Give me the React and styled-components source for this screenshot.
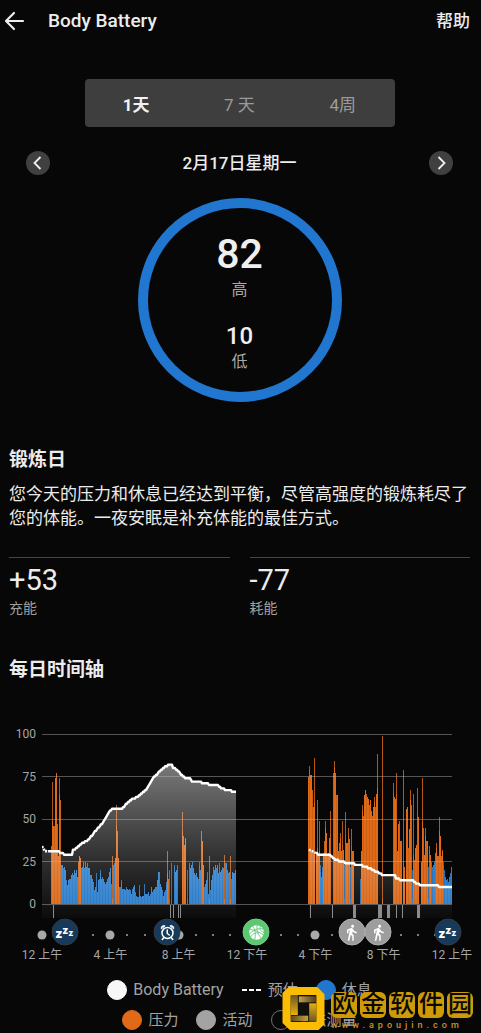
import React from 'react';
import styled, { createGlobalStyle } from 'styled-components';
import { MdDirectionsWalk } from 'react-icons/md';

const GlobalStyle = createGlobalStyle`
  *, *::before, *::after { box-sizing: border-box; }
  body {
    margin: 0;
    background: #070707;
    color: #ececec;
    font-family: Roboto, "Noto Sans CJK SC", sans-serif;
  }
  h1, h2, p, dl, dd, ul, ol { margin: 0; padding: 0; }
  ul, ol { list-style: none; }
  button { font: inherit; color: inherit; border: 0; padding: 0; cursor: pointer; }
`;

const Page = styled.main`
  position: relative;
  padding: 0 11px 3px 9px;
  overflow: hidden;
`;

const Header = styled.header`
  display: flex;
  align-items: center;
  height: 41px;
`;

const BackButton = styled.button`
  display: flex;
  width: 39px;
  margin-left: -5px;
  background: none;
`;

const HeaderTitle = styled.h1`
  flex: 1;
  padding-left: 5px;
  font-size: 19px;
  line-height: 24px;
  font-weight: 500;
`;

const HelpLink = styled.a`
  color: inherit;
  text-decoration: none;
  font-size: 17px;
  line-height: 24px;
  font-weight: 500;
`;

const RangeTabs = styled.nav`
  display: flex;
  max-width: 310px;
  height: 48px;
  margin: 38px auto 0;
  border-radius: 4px;
  background: #3e3e3e;
`;

const RangeTab = styled.button`
  flex: 1;
  background: none;
  font-size: 17px;
  font-weight: ${(p) => (p.$active ? 700 : 400)};
  color: ${(p) => (p.$active ? '#f2f2f2' : '#9b9b9b')};
`;

const DateRow = styled.div`
  display: flex;
  align-items: center;
  justify-content: space-between;
  margin: 24px 17px 0;
  font-size: 17px;
  line-height: 24px;
  font-weight: 500;
`;

const RoundButton = styled.button`
  display: grid;
  place-items: center;
  width: 24px;
  height: 24px;
  border-radius: 50%;
  background: #404040;
`;

const Ring = styled.section`
  display: flex;
  flex-direction: column;
  align-items: center;
  width: 204px;
  height: 204px;
  margin: 23px auto 0;
  padding-top: 22px;
  border: 10px solid #2176cf;
  border-radius: 50%;
`;

const RingValue = styled.div`
  font-size: ${(p) => (p.$large ? 41 : 24)}px;
  line-height: ${(p) => (p.$large ? 48 : 28)}px;
  margin-top: ${(p) => (p.$large ? 0 : 20)}px;
  font-weight: 500;
  color: #efefef;
`;

const RingLabel = styled.div`
  font-size: 16px;
  line-height: 24px;
  color: #a8a8a8;
`;

const SectionTitle = styled.h2`
  margin-top: ${(p) => p.$top}px;
  font-size: 19px;
  line-height: 24px;
  font-weight: 700;
`;

const Summary = styled.p`
  margin-top: 10px;
  font-size: 17px;
  line-height: 24px;
`;

const Metrics = styled.dl`
  display: grid;
  grid-template-columns: 1fr 1fr;
  gap: 20px;
  margin-top: 27px;
`;

const Metric = styled.div`
  display: flex;
  flex-direction: column-reverse;
  padding-top: 6px;
  border-top: 1px solid #454545;
`;

const MetricValue = styled.dd`
  font-size: 29px;
  line-height: 32px;
  margin-bottom: 2px;
`;

const MetricLabel = styled.dt`
  font-size: 14px;
  line-height: 20px;
  color: #a0a0a0;
`;

const Chart = styled.section`
  display: grid;
  grid-template-columns: 27px 1fr;
  column-gap: 6px;
  margin-top: 44px;
  padding-right: 18px;
  font-size: 12px;
  line-height: 16px;
  color: #a6a6a6;
`;

const YAxis = styled.div`
  display: flex;
  flex-direction: column;
  justify-content: space-between;
  height: 186px;
  text-align: right;
`;

const Plot = styled.svg`
  display: block;
  width: 100%;
  height: 192px;
`;

const Timeline = styled.div`
  grid-column: 2;
  position: relative;
  height: 28px;
`;

const HourDot = styled.span`
  position: absolute;
  top: 17px;
  width: ${(p) => (p.$major ? 9 : 2)}px;
  height: ${(p) => (p.$major ? 9 : 2)}px;
  border-radius: 50%;
  background: #a9a9a9;
  transform: translate(-50%, -50%);
`;

const EventBadge = styled.span`
  position: absolute;
  top: 14px;
  display: grid;
  place-items: center;
  width: 27px;
  height: 27px;
  border-radius: 50%;
  border: 1px solid ${(p) => p.$edge};
  background: ${(p) => p.$color};
  color: #fff;
  transform: translate(-50%, -50%);
`;

const XAxis = styled.div`
  grid-column: 2;
  display: flex;
  justify-content: space-between;
  margin-top: 1px;
`;

const XTick = styled.span`
  display: flex;
  justify-content: center;
  width: 0;
  white-space: nowrap;
`;

const Legend = styled.ul`
  display: flex;
  flex-wrap: wrap;
  justify-content: center;
  gap: 10px 18px;
  max-width: 322px;
  margin: 17px auto 0;
  line-height: 20px;
  color: #a3a3a3;
`;

const LegendItem = styled.li`
  display: flex;
  align-items: center;
  gap: 6px;
  font-size: ${(p) => (p.$latin ? 16 : 15)}px;
`;

const Swatch = styled.span`
  width: 20px;
  height: 20px;
  border-radius: 50%;
  background: ${(p) => p.$color};
  border: 1px solid ${(p) => p.$edge || p.$color};
`;

const Watermark = styled.aside`
  position: absolute;
  right: 8px;
  bottom: 3px;
  display: flex;
  align-items: center;
  gap: 6px;
`;

const WatermarkText = styled.div`
  display: flex;
  flex-direction: column;
  gap: 2px;
  padding-top: 5px;
`;

const SealRow = styled.div`
  display: flex;
  gap: 3px;
`;

const Seal = styled.span`
  width: 26px;
  height: 26px;
  border-radius: 6px;
  background: #cf9a08;
  color: #0b0903;
  font-size: 24px;
  line-height: 25px;
  font-weight: 500;
  text-align: center;
`;

const SiteName = styled.span`
  font-size: 9px;
  line-height: 10px;
  letter-spacing: 4px;
  font-weight: 500;
  color: #c99425;
`;

const STRESS = '#e06a18';
const REST = '#2b7fd0';

// Runs of one-unit columns: [start, kind, levels]
const runs = [
  [9, 's', [34, 72, 46, 46, 74, 77, 47, 28, 74, 61]],
  [19, 'r', [23, 23, 21, 22, 20, 14, 11, 14, 15, 15, 17, 18, 17, 20, 18, 20, 16]],
  [36, 's', [25, 28, 27]],
  [39, 'r', [21, 22, 25, 21, 25, 22, 24, 21, 21, 17, 17, 15, 13, 8, 10, 18, 7, 14, 15, 20, 15, 16, 15, 13, 12, 13, 15, 16, 19, 21, 12]],
  [70, 's', [28]],
  [71, 'r', [23, 24]],
  [73, 's', [27, 58, 43, 27]],
  [77, 'r', [10, 10, 14, 9, 9, 9, 8, 10, 9, 8, 9, 8, 6, 9, 10, 11, 7, 5, 4, 4, 11, 5, 4, 5, 5, 12, 6, 6, 6, 7, 5, 6, 10, 7, 8, 9, 10, 10, 14, 19, 19, 12, 10, 8, 5, 7, 8, 13]],
  [125, 's', [31, 15]],
  [127, 'r', [20, 0, 24, 0, 0, 23, 19, 20, 23]],
  [140, 's', [54, 40, 35, 39]],
  [145, 'r', [20, 0, 24, 21, 23, 25, 21, 18, 17, 18, 16, 15, 25, 20]],
  [159, 's', [43, 37, 23]],
  [162, 'r', [10, 12, 14, 19, 6]],
  [167, 's', [28]],
  [168, 'r', [8, 14, 17, 22, 20, 23, 21, 23, 18, 24, 19, 20, 22, 21]],
  [182, 's', [29]],
  [183, 'r', [24, 24, 20, 18, 19]],
  [188, 's', [28]],
  [189, 'r', [15, 19, 18, 18, 20]],
  [266, 's', [75, 81, 76, 76, 67, 57, 86, 0, 30, 61, 28, 49]],
  [278, 'r', [23, 16, 22]],
  [281, 's', [30, 37, 49, 42, 28, 30, 39, 55, 0, 0, 77, 84, 77, 64, 64, 31, 36, 42, 31, 49, 32]],
  [302, 'r', [23]],
  [303, 's', [54, 36, 36, 45, 38]],
  [308, 'r', [22]],
  [309, 's', [44, 31, 31]],
  [318, 'r', [15]],
  [319, 's', [31, 58, 52, 64, 67, 65, 63, 62, 58, 61, 55, 52, 57, 63, 57, 65, 88, 0, 0, 0, 0, 99, 0]],
  [351, 's', [71, 63, 62, 77, 31, 47, 49, 37, 37, 0, 79, 22, 0, 56, 57, 33, 44, 67, 58]],
  [370, 'r', [20]],
  [371, 's', [65, 26, 33, 35, 68, 51, 0, 0, 25, 74, 45, 29, 45, 37, 37]],
  [386, 'r', [22]],
  [387, 's', [34, 29]],
  [389, 'r', [25, 22, 23, 25]],
  [393, 's', [30, 36, 28, 28, 51, 40, 28, 32]],
  [401, 'r', [25, 20, 16, 14, 15, 13, 16, 18, 22, 25]],
];

const morning = [[8, 31], [17, 31], [18, 30], [21, 30], [22, 29], [30, 29], [31, 32], [33, 32], [36, 34], [41, 36], [47, 38], [55, 44], [61, 48], [66, 53], [70, 56], [80, 56], [83, 58], [88, 61], [95, 63], [100, 65], [105, 68], [111, 74], [116, 77], [121, 80], [127, 82], [130, 82], [131, 80], [135, 79], [139, 76], [143, 74], [148, 74], [150, 72], [158, 72], [160, 71], [165, 71], [167, 70], [175, 70], [177, 69], [180, 68], [185, 67], [194, 66]];
const evening = [[274, 30], [277, 29], [287, 29], [291, 27], [298, 25], [306, 24], [318, 23], [323, 22], [328, 21], [334, 19], [338, 18], [341, 17], [353, 17], [354, 15], [360, 14], [370, 14], [374, 12], [380, 11], [395, 11], [397, 10], [410, 10]];

const activityTicks = [[11, 1], [128, 1], [131, 1], [136, 1], [138, 1], [268, 1], [290, 1], [311, 3], [336, 4], [345, 3], [354, 1], [360, 1], [375, 3]];

const BASE = 178;
const yOf = (level) => BASE - level * 1.7;

// The level is kept as a whole number, so the line moves in small steps.
function stepPoints(points) {
  const out = [];
  for (let i = 0; i < points.length - 1; i += 1) {
    const [x0, v0] = points[i];
    const [x1, v1] = points[i + 1];
    for (let x = x0; x < x1; x += 1) {
      out.push([x, Math.round(v0 + ((v1 - v0) * (x - x0)) / (x1 - x0))]);
    }
  }
  out.push(points[points.length - 1]);
  return out;
}

const toPath = (points) =>
  points.map(([x, v], i) => `${i ? 'L' : 'M'}${x} ${yOf(v).toFixed(1)}`).join('');

function areaPath(points, start, startLevel) {
  return `M${start} ${yOf(startLevel)}${toPath(points).replace('M', 'L')}V192H${start}Z`;
}

function Bars() {
  return runs.map(([start, kind, levels]) =>
    levels.map((level, i) => {
      const around = Math.max(levels[i - 1] || 0, levels[i + 1] || 0);
      const shared = Math.min(level, around + 3);
      const color = kind === 's' ? STRESS : REST;
      const x = start + i;
      return level > 0 ? (
        <g key={x} fill={color}>
          <rect x={x} y={yOf(shared)} width="1" height={shared * 1.7} opacity={x % 3 ? 1 : 0.9} />
          {level > shared && (
            <rect x={x} y={yOf(level)} width="1" height={(level - shared) * 1.7} opacity="0.8" />
          )}
        </g>
      ) : null;
    })
  );
}

function BatteryPlot() {
  const left = stepPoints(morning);
  const right = stepPoints(evening);
  return (
    <Plot viewBox="0 0 410 192" preserveAspectRatio="none" role="img" aria-label="Body Battery">
      <defs>
        <linearGradient id="level" gradientUnits="userSpaceOnUse" x1="0" y1="38" x2="0" y2="192">
          <stop offset="0" stopColor="#fff" stopOpacity="0.46" />
          <stop offset="0.6" stopColor="#fff" stopOpacity="0.17" />
          <stop offset="1" stopColor="#fff" stopOpacity="0.02" />
        </linearGradient>
      </defs>
      <g shapeRendering="crispEdges"><Bars /></g>
      <path d={areaPath(left, 0, 34)} fill="url(#level)" />
      <path d={areaPath(right, 267, 32)} fill="url(#level)" />
      <g fill="#b4b4b4" opacity="0.45" shapeRendering="crispEdges">
        {[100, 75, 50, 25, 0].map((v) => (
          <rect key={v} x="0" y={Math.floor(yOf(v))} width="410" height="1" />
        ))}
      </g>
      <g fill="#8b8b8b" shapeRendering="crispEdges">
        {activityTicks.map(([x, w]) => (
          <rect key={x} x={x} y="179" width={w} height="13" />
        ))}
      </g>
      <g fill="none" stroke="#fff" strokeWidth="2.400" strokeLinejoin="round">
        <path d={toPath(left)} />
        <path d={toPath(right)} />
        <path d={`M0 ${yOf(34)}L3 ${yOf(31)}H8`} strokeDasharray="2 1" />
        <path d={`M267 ${yOf(32)}L274 ${yOf(30)}`} strokeDasharray="2 1" />
      </g>
    </Plot>
  );
}

function SleepIcon() {
  return (
    <svg width="22" height="20" viewBox="0 0 22 20" fill="#fff" fontWeight="900" fontSize="13" aria-hidden="true">
      <text x="2" y="15">z</text>
      <text x="9" y="11" fontSize="11">z</text>
      <text x="15" y="13" fontSize="9">z</text>
    </svg>
  );
}

function AlarmIcon() {
  return (
    <svg width="18" height="18" viewBox="0 0 36 36" fill="none" stroke="#fff" strokeWidth="3" strokeLinecap="round" strokeLinejoin="round" aria-hidden="true">
      <circle cx="18" cy="19" r="11" />
      <path d="M17.500 13v7l4 3M10 29l-2.500 3M26 29l2.500 3" />
      <path d="M5.500 10C4.500 6 9 3 12.500 4.500ZM30.500 10C31.500 6 27 3 23.500 4.500Z" fill="#fff" strokeWidth="2" />
    </svg>
  );
}

function BasketballIcon() {
  return (
    <svg width="16" height="16" viewBox="0 0 32 32" aria-hidden="true">
      <circle cx="16" cy="16" r="14.500" fill="#fff" />
      <g fill="none" stroke="#62c875" strokeWidth="1.800">
        <path d="M2 19C11 10 20 7 29 9M17 1C16 12 20 22 26 28M8 3C14 10 15 21 12 31M3 10C12 11 22 15 30 21" />
        <path d="M4 26C7 19 13 16 20 17M24 3C21 8 23 13 31 16" />
      </g>
    </svg>
  );
}

function SiteLogo() {
  return (
    <svg width="43" height="43" viewBox="0 0 126 129" aria-hidden="true">
      <defs>
        <linearGradient id="fadeRight"><stop stopColor="#c4a14c" /><stop offset="1" stopColor="#4a3c1b" /></linearGradient>
        <linearGradient id="fadeLeft"><stop stopColor="#5a4a20" /><stop offset="1" stopColor="#c9a040" /></linearGradient>
        <linearGradient id="fadeDown" x2="0" y2="1"><stop stopColor="#e8b010" /><stop offset="1" stopColor="#6a5526" /></linearGradient>
        <linearGradient id="fadeUp" x2="0" y2="1"><stop stopColor="#6a5526" /><stop offset="1" stopColor="#e8b010" /></linearGradient>
      </defs>
      <path fill="#fbbc04" fillRule="evenodd" d="M18 0H104L126 22V112L108 129H22L0 108V18ZM25 24V104H101V24Z" />
      <path fill="#11100c" d="M25 24H101V104H25Z" />
      <path fill="url(#fadeUp)" d="M25 24H46V84H25Z" />
      <path fill="url(#fadeRight)" d="M49 28H101V46H49Z" />
      <path fill="url(#fadeDown)" d="M80 49H101V104H80Z" />
      <path fill="url(#fadeLeft)" d="M25 86H77V102H25Z" />
    </svg>
  );
}

const NAVY = { $color: '#17395a', $edge: '#333a40' };
const GREY = { $color: '#9d9d9d', $edge: '#b0b0b0' };
const events = [
  { id: 'sleep', at: 5.5, look: NAVY, icon: <SleepIcon /> },
  { id: 'wake', at: 30.5, look: NAVY, icon: <AlarmIcon /> },
  { id: 'ball', at: 52.3, look: { $color: '#5dc872', $edge: '#74cf85' }, icon: <BasketballIcon /> },
  { id: 'walk1', at: 75.6, look: GREY, icon: <MdDirectionsWalk size={18} /> },
  { id: 'walk2', at: 82, look: GREY, icon: <MdDirectionsWalk size={18} /> },
  { id: 'night', at: 99, look: NAVY, icon: <SleepIcon /> },
];
const hiddenHours = [1, 2, 7, 12, 13, 18, 19, 20, 24];
const hours = Array.from({ length: 25 }, (_, h) => h).filter((h) => !hiddenHours.includes(h));
const xLabels = ['12 上午', '4 上午', '8 上午', '12 下午', '4 下午', '8 下午', '12 上午'];

export default function App() {
  return (
    <>
      <GlobalStyle />
      <Page>
        <Header>
          <BackButton aria-label="返回">
            <svg width="22" height="22" viewBox="0 0 22 22" fill="none" stroke="#ededed" strokeWidth="2.200" strokeLinecap="round" strokeLinejoin="round" aria-hidden="true">
              <path d="M19 11H2M10 3L2 11L10 19" />
            </svg>
          </BackButton>
          <HeaderTitle>Body Battery</HeaderTitle>
          <HelpLink href="#help">帮助</HelpLink>
        </Header>

        <RangeTabs>
          <RangeTab $active aria-pressed="true">1天</RangeTab>
          <RangeTab aria-pressed="false">7 天</RangeTab>
          <RangeTab aria-pressed="false">4周</RangeTab>
        </RangeTabs>

        <DateRow>
          <RoundButton aria-label="前一天">
            <svg width="14" height="14" viewBox="0 0 14 14" fill="none" stroke="#f0f0f0" strokeWidth="1.800" aria-hidden="true"><path d="M9.500 1L3.500 7L9.500 13" /></svg>
          </RoundButton>
          <span>2月17日星期一</span>
          <RoundButton aria-label="后一天">
            <svg width="14" height="14" viewBox="0 0 14 14" fill="none" stroke="#f0f0f0" strokeWidth="1.800" aria-hidden="true"><path d="M4.500 1L10.500 7L4.500 13" /></svg>
          </RoundButton>
        </DateRow>

        <Ring>
          <RingValue $large>82</RingValue>
          <RingLabel>高</RingLabel>
          <RingValue>10</RingValue>
          <RingLabel>低</RingLabel>
        </Ring>

        <SectionTitle $top={46}>锻炼日</SectionTitle>
        <Summary>您今天的压力和休息已经达到平衡，尽管高强度的锻炼耗尽了您的体能。一夜安眠是补充体能的最佳方式。</Summary>

        <Metrics>
          <Metric>
            <MetricLabel>充能</MetricLabel>
            <MetricValue>+53</MetricValue>
          </Metric>
          <Metric>
            <MetricLabel>耗能</MetricLabel>
            <MetricValue>-77</MetricValue>
          </Metric>
        </Metrics>

        <SectionTitle $top={40}>每日时间轴</SectionTitle>
        <Chart>
          <YAxis>
            {[100, 75, 50, 25, 0].map((v) => <span key={v}>{v}</span>)}
          </YAxis>
          <BatteryPlot />
          <Timeline>
            {hours.map((h) => (
              <HourDot key={h} $major={h % 4 === 0} style={{ left: `${(h / 24) * 100}%` }} />
            ))}
            {events.map((e) => (
              <EventBadge key={e.id} {...e.look} style={{ left: `${e.at}%` }}>{e.icon}</EventBadge>
            ))}
          </Timeline>
          <XAxis>
            {xLabels.map((label, i) => <XTick key={i}>{label}</XTick>)}
          </XAxis>
        </Chart>

        <Legend>
          <LegendItem $latin><Swatch $color="#f7f7f7" />Body Battery</LegendItem>
          <LegendItem>
            <svg width="20" height="4" viewBox="0 0 20 4" fill="#fff" aria-hidden="true"><path d="M0 1H5V3H0ZM7 1H12V3H7ZM14 1H19V3H14Z" /></svg>
            预估
          </LegendItem>
          <LegendItem><Swatch $color="#2176cf" />休息</LegendItem>
          <LegendItem><Swatch $color={STRESS} />压力</LegendItem>
          <LegendItem><Swatch $color="#a3a3a3" />活动</LegendItem>
          <LegendItem><Swatch $color="transparent" $edge="#6f6f6f" />无法测量</LegendItem>
        </Legend>

        <Watermark>
          <SiteLogo />
          <WatermarkText>
            <SealRow>
              {['欧', '金', '软', '件', '园'].map((c) => <Seal key={c}>{c}</Seal>)}
            </SealRow>
            <SiteName>www.apoujin.com</SiteName>
          </WatermarkText>
        </Watermark>
      </Page>
    </>
  );
}
